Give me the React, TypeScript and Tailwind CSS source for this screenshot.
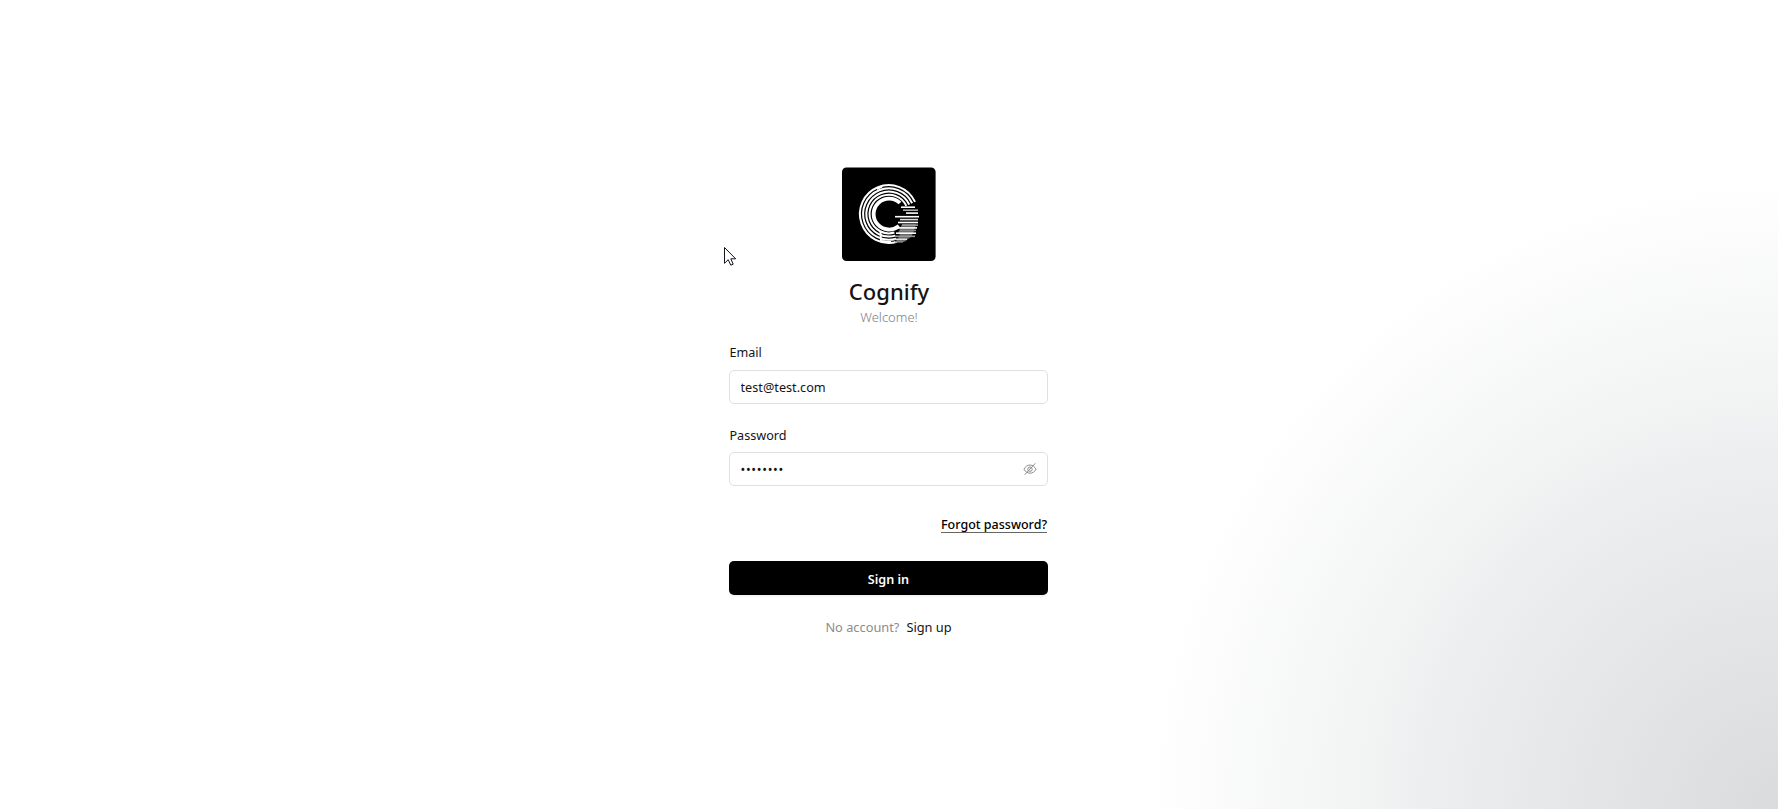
const bars: [number, number, number, string][] = [
  [59, 39.4, 14, '#fff'], [61, 42.4, 15, '#aaa'], [64, 45.3, 12, '#fff'], [53, 48.9, 24, '#fff'],
  [58, 51.8, 18, '#ddd'], [56, 54.7, 20, '#fff'], [60, 57.4, 16, '#999'], [55, 60.1, 20, '#fff'],
  [58, 62.7, 16, '#888'], [54, 65.4, 20, '#fff'], [53, 68.5, 20, '#999'], [52, 71.5, 13, '#ddd'], [53, 74, 8, '#888'],
];

function Logo() {
  return (
    <svg className="size-[94px]" viewBox="0 0 94 94" role="img" aria-label="Cognify">
      <rect y="0.4" width="93.6" height="93.6" rx="4.5" fill="#000" />
      <g fill="none" stroke="#fff">
        {[28.9, 25.7, 22.5, 19.3].map((r) => (
          <path key={r} strokeWidth="2" d={`M${47 + r * 0.9} ${47 - r * 0.42}A${r} ${r} 0 1 0 ${47 + r * 0.28} ${47 + r * 0.96}`} />
        ))}
        <path strokeWidth="3.8" d="M58 36A15.5 15.5 0 1 0 57 59" />
        <path strokeWidth="2" d="M35 22L40 19.5M38.5 65L39 74M40 74L49 75" />
      </g>
      <path fill="#666" d="M60 57H74L72 64L69 70L62 75H54L58 68L56 66Z" />
      {bars.map(([x, y, w, fill]) => (
        <rect key={y} x={x} y={y} width={w} height="1.6" fill={fill} />
      ))}
    </svg>
  );
}

function EyeInvisible() {
  return (
    <svg className="size-[14px] text-[#8c8c8c]" viewBox="0 0 14 14" fill="none" stroke="currentColor" strokeWidth="1">
      <path d="M1 7.2C3.5 1.7 10.5 1.7 13 7.2C10.5 12.5 3.5 12.5 1 7.2ZM1.7 12.7L12.3 1.3" />
      <circle cx="7" cy="7.2" r="2.2" />
    </svg>
  );
}

export default function App() {
  return (
    <div className="relative flex h-screen justify-center overflow-hidden bg-white bg-[radial-gradient(circle_at_100%_100%,#dadbdd_0px,#eeeff1_367px,#f1f2f2_400px,#ffffff_630px)] pr-px font-['Noto_Sans',sans-serif] text-[12.6px] leading-5 text-[#141414]">
      <form className="flex w-[319px] flex-col pt-[167px]" onSubmit={(e) => e.preventDefault()}>
        <header className="flex flex-col items-center pl-px">
          <Logo />
          <h1 className="mt-[14px] text-[22px] leading-8 font-medium">Cognify</h1>
          <p className="mt-px text-[13px] leading-[18px] font-light text-[#808080]">Welcome!</p>
        </header>
        <label className="mt-[17px] pl-[0.5px]" htmlFor="email">Email</label>
        <input id="email" defaultValue="test@test.com" className="mt-[7px] h-[34px] rounded-[5px] border border-[#e0e0e0] bg-white px-[10.5px] text-[12.7px] outline-none" />
        <label className="mt-[22px] pl-[0.5px]" htmlFor="password">Password</label>
        <div className="mt-[6px] flex h-[34px] items-center justify-between rounded-[5px] border border-[#e0e0e0] bg-white pr-2.5 pl-[10.5px]">
          <input id="password" type="password" defaultValue="password" className="w-40 pt-px tracking-[0.7px] outline-none" />
          <EyeInvisible />
        </div>
        <a className="mt-[31px] mr-px self-end border-b border-[#666] text-[12.5px] leading-[15px] font-medium text-black">Forgot password?</a>
        <button className="mt-7 h-[34px] rounded-[5px] bg-black pt-[3px] font-semibold text-white shadow-[0_2px_0_rgba(0,0,0,0.04)]">Sign in</button>
        <p className="mt-[22px] flex justify-center gap-[7px] text-[12.8px] text-[#8c8c8c]">
          No account? <a className="text-[#141414]">Sign up</a>
        </p>
      </form>
      <svg className="absolute top-[247px] left-[724px] h-[19px] w-3" viewBox="0 0 12 19" fill="#fff" stroke="#18141f" strokeWidth="1">
        <path d="M.5 .5V16.3L4.2 12.7L6.8 18.2L9.2 17.2L6.8 11.8H11.7Z" />
      </svg>
    </div>
  );
}
